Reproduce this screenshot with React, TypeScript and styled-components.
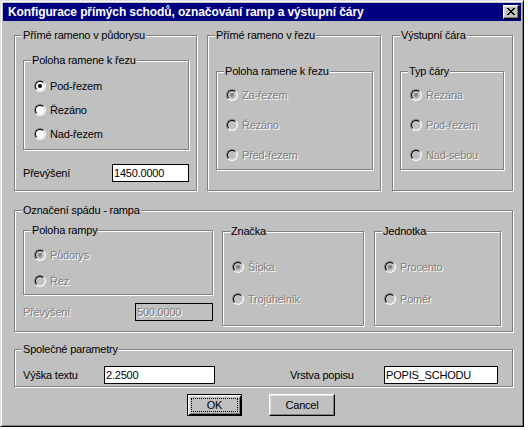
import React from "react";
import styled, { createGlobalStyle, css } from "styled-components";

const GlobalStyle = createGlobalStyle`
  html, body { margin: 0; padding: 0; background: #ffffff; }
  body {
    font-family: "Liberation Sans", Arial, sans-serif;
    font-size: 11px;
    letter-spacing: -0.2px;
    color: #000;
  }
  * { box-sizing: border-box; }
`;

const Window = styled.div`
  width: 524px;
  height: 427px;
  background: #c0c0c0;
  border: 1px solid;
  border-color: #dfdfdf #000 #000 #dfdfdf;
  box-shadow: inset 1px 1px #fff, inset -1px -1px #808080;
  padding: 2px;
  display: flex;
  flex-direction: column;
`;

const TitleBar = styled.div`
  height: 18px;
  flex: none;
  background: #000080;
  color: #fff;
  display: flex;
  align-items: center;
  justify-content: space-between;
  padding: 0 2px 0 5px;
`;

const Title = styled.span`
  font-weight: bold;
  font-size: 12px;
  letter-spacing: -0.1px;
  line-height: 14px;
  white-space: nowrap;
`;

const CloseBtn = styled.div`
  width: 16px;
  height: 14px;
  background: #c0c0c0;
  border: 1px solid;
  border-color: #fff #000 #000 #fff;
  box-shadow: inset -1px -1px #808080, inset 1px 1px #dfdfdf;
  display: flex;
  align-items: center;
  justify-content: center;
  padding-bottom: 1px;
`;

const Body = styled.div`
  flex: 1;
  display: flex;
  flex-direction: column;
  padding: 14px 0 0 11px;
`;

const Row = styled.div<{ $gap: number; $mt?: number }>`
  display: flex;
  align-items: flex-start;
  gap: ${(p) => p.$gap}px;
  margin-top: ${(p) => p.$mt ?? 0}px;
`;

const Group = styled.div<{
  $w: number;
  $h: number;
  $pt?: number;
  $pl?: number;
  $mt?: number;
  $ml?: number;
  $gap?: number;
  $row?: boolean;
}>`
  position: relative;
  flex: none;
  width: ${(p) => p.$w}px;
  height: ${(p) => p.$h}px;
  margin-top: ${(p) => p.$mt ?? 0}px;
  margin-left: ${(p) => p.$ml ?? 0}px;
  border: 1px solid #808080;
  box-shadow: inset 1px 1px #fff, 1px 1px #fff;
  padding: ${(p) => p.$pt ?? 0}px 0 0 ${(p) => p.$pl ?? 0}px;
  display: flex;
  flex-direction: ${(p) => (p.$row ? "row" : "column")};
  align-items: flex-start;
  gap: ${(p) => p.$gap ?? 0}px;
`;

const Legend = styled.span`
  position: absolute;
  top: -8px;
  left: 7px;
  padding: 0 1px;
  background: #c0c0c0;
  line-height: 14px;
  white-space: nowrap;
`;

const Column = styled.div<{ $w: number; $gap: number }>`
  width: ${(p) => p.$w}px;
  display: flex;
  flex-direction: column;
  gap: ${(p) => p.$gap}px;
`;

const RadioRow = styled.div`
  display: flex;
  align-items: center;
  height: 16px;
  gap: 4px;
`;

const RadioOuter = styled.span`
  width: 12px;
  height: 12px;
  flex: none;
  border-radius: 50%;
  border: 1px solid;
  border-color: #808080 #fff #fff #808080;
  display: flex;
`;

const RadioInner = styled.span<{ $disabled?: boolean }>`
  width: 10px;
  height: 10px;
  border-radius: 50%;
  border: 1px solid;
  border-color: #000 #dfdfdf #dfdfdf #000;
  background: ${(p) => (p.$disabled ? "#c0c0c0" : "#fff")};
  display: flex;
  align-items: center;
  justify-content: center;
`;

const Dot = styled.span<{ $disabled?: boolean }>`
  width: 4px;
  height: 4px;
  border-radius: 50%;
  background: ${(p) => (p.$disabled ? "#808080" : "#000")};
`;

const Text = styled.span<{ $disabled?: boolean; $w?: number; $ml?: number }>`
  line-height: 13px;
  white-space: nowrap;
  flex: none;
  ${(p) => p.$w !== undefined && css`width: ${p.$w}px;`}
  margin-left: ${(p) => p.$ml ?? 0}px;
  ${(p) =>
    p.$disabled &&
    css`
      color: #808080;
      text-shadow: 1px 1px 0 #fff;
    `}
`;

const FieldRow = styled.div<{ $w?: number }>`
  display: flex;
  align-items: center;
  justify-content: space-between;
  ${(p) => p.$w !== undefined && css`width: ${p.$w}px;`}
`;

const Field = styled.input<{ $w: number }>`
  width: ${(p) => p.$w}px;
  height: 18px;
  flex: none;
  margin: 0;
  padding: 0 1px;
  border: 1px solid #000;
  background: #fff;
  color: #000;
  font-family: "Liberation Sans", Arial, sans-serif;
  font-size: 11px;
  letter-spacing: -0.2px;
  outline: none;
  &:disabled {
    background: #c0c0c0;
    color: #808080;
    text-shadow: 1px 1px 0 #fff;
  }
`;

const ButtonRow = styled.div`
  display: flex;
  gap: 27px;
  margin-top: 7px;
  padding-left: 173px;
`;

const Button = styled.button<{ $w: number; $default?: boolean }>`
  width: ${(p) => p.$w}px;
  height: 22px;
  margin: 0;
  padding: 3px;
  background: #c0c0c0;
  color: #000;
  font-family: "Liberation Sans", Arial, sans-serif;
  font-size: 11px;
  letter-spacing: -0.2px;
  border: 1px solid;
  border-color: #fff #000 #000 #fff;
  box-shadow: inset -1px -1px #808080, inset 1px 1px #dfdfdf;
  display: flex;
  align-items: stretch;
  justify-content: center;
  ${(p) =>
    p.$default &&
    css`
      border-color: #000;
      box-shadow: inset 1px 1px #fff, inset -1px -1px #000,
        inset 2px 2px #dfdfdf, inset -2px -2px #808080;
    `}
`;

const Focus = styled.span<{ $on?: boolean }>`
  flex: 1;
  display: flex;
  align-items: center;
  justify-content: center;
  border: 1px dotted ${(p) => (p.$on ? "#000" : "transparent")};
`;

const CloseGlyph = () => (
  <svg width="8" height="7" viewBox="0 0 8 7" shapeRendering="crispEdges">
    <path
      fill="#000"
      d="M0 0h2v1h-2zM6 0h2v1h-2zM1 1h2v1h-2zM5 1h2v1h-2zM2 2h4v1h-4zM3 3h2v1h-2zM2 4h4v1h-4zM1 5h2v1h-2zM5 5h2v1h-2zM0 6h2v1h-2zM6 6h2v1h-2z"
    />
  </svg>
);

type RadioProps = { label: string; checked?: boolean; disabled?: boolean };
const Radio = ({ label, checked, disabled }: RadioProps) => (
  <RadioRow>
    <RadioOuter>
      <RadioInner $disabled={disabled}>{checked && <Dot $disabled={disabled} />}</RadioInner>
    </RadioOuter>
    <Text $disabled={disabled}>{label}</Text>
  </RadioRow>
);

export default function App() {
  return (
    <>
      <GlobalStyle />
      <Window>
        <TitleBar>
          <Title>Konfigurace přímých schodů, označování ramp a výstupní čáry</Title>
          <CloseBtn>
            <CloseGlyph />
          </CloseBtn>
        </TitleBar>
        <Body>
          <Row $gap={10}>
            <Group $w={183} $h={156} $pt={24} $pl={8} $gap={14}>
              <Legend>Přímé rameno v půdorysu</Legend>
              <Group $w={166} $h={90} $pt={17} $pl={10} $gap={8}>
                <Legend>Poloha ramene k řezu</Legend>
                <Radio label="Pod-řezem" checked />
                <Radio label="Řezáno" />
                <Radio label="Nad-řezem" />
              </Group>
              <FieldRow $w={166}>
                <Text>Převýšení</Text>
                <Field $w={77} readOnly value="1450.0000" />
              </FieldRow>
            </Group>
            <Group $w={174} $h={156} $pt={35} $pl={8}>
              <Legend>Přímé rameno v řezu</Legend>
              <Group $w={157} $h={99} $pt={15} $pl={9} $gap={14}>
                <Legend>Poloha ramene k řezu</Legend>
                <Radio label="Za-řezem" checked disabled />
                <Radio label="Řezáno" disabled />
                <Radio label="Před-řezem" disabled />
              </Group>
            </Group>
            <Group $w={121} $h={156} $pt={35} $pl={7} $ml={1}>
              <Legend>Výstupní čára</Legend>
              <Group $w={104} $h={99} $pt={15} $pl={9} $gap={14}>
                <Legend>Typ čáry</Legend>
                <Radio label="Řezána" checked disabled />
                <Radio label="Pod-řezem" disabled />
                <Radio label="Nad-sebou" disabled />
              </Group>
            </Group>
          </Row>

          <Row $gap={0} $mt={19}>
            <Group $w={499} $h={122} $pt={19} $pl={8} $gap={9} $row>
              <Legend>Označení spádu - rampa</Legend>
              <Column $w={190} $gap={8}>
                <Group $w={190} $h={65} $pt={16} $pl={10} $gap={10}>
                  <Legend>Poloha rampy</Legend>
                  <Radio label="Půdorys" checked disabled />
                  <Radio label="Řez" disabled />
                </Group>
                <FieldRow $w={190}>
                  <Text $disabled>Převýšení</Text>
                  <Field $w={78} disabled value="500.0000" />
                </FieldRow>
              </Column>
              <Group $w={142} $h={95} $mt={1} $pt={27} $pl={9} $gap={16}>
                <Legend>Značka</Legend>
                <Radio label="Šipka" checked disabled />
                <Radio label="Trojúhelník" disabled />
              </Group>
              <Group $w={127} $h={95} $mt={1} $ml={1} $pt={27} $pl={9} $gap={16}>
                <Legend>Jednotka</Legend>
                <Radio label="Procento" checked disabled />
                <Radio label="Poměr" disabled />
              </Group>
            </Group>
          </Row>

          <Row $gap={0} $mt={17}>
            <Group $w={499} $h={38} $pt={16} $pl={8} $row>
              <Legend>Společné parametry</Legend>
              <FieldRow>
                <Text $w={81}>Výška textu</Text>
                <Field $w={111} readOnly value="2.2500" />
                <Text $w={94} $ml={75}>Vrstva popisu</Text>
                <Field $w={114} readOnly value="POPIS_SCHODU" />
              </FieldRow>
            </Group>
          </Row>

          <ButtonRow>
            <Button $w={55} $default>
              <Focus $on>OK</Focus>
            </Button>
            <Button $w={66}>
              <Focus>Cancel</Focus>
            </Button>
          </ButtonRow>
        </Body>
      </Window>
    </>
  );
}
